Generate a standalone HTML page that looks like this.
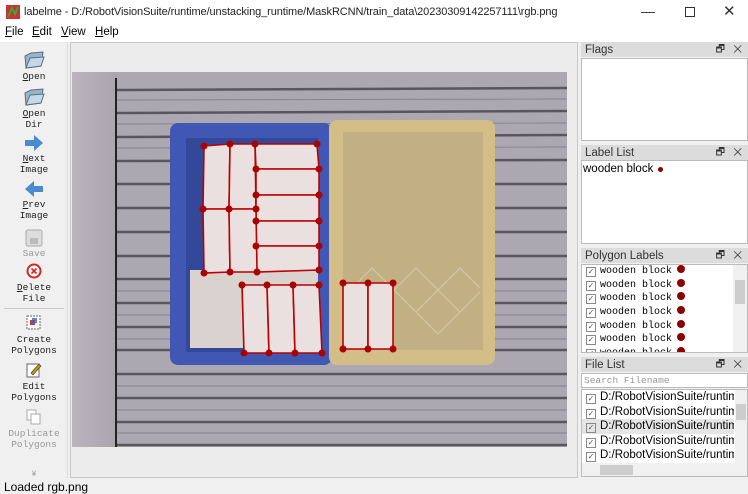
<!DOCTYPE html>
<html><head><meta charset="utf-8"><style>
*{margin:0;padding:0;box-sizing:border-box}
body{width:748px;height:494px;overflow:hidden;background:#f0f0f0;font-family:"Liberation Sans",sans-serif;font-size:12px;color:#000;position:relative}
.abs{position:absolute}
.title{left:0;top:0;width:748px;height:24px;background:#fff}
.menu{left:0;top:24px;width:748px;height:18px;background:#fff}
.menu span{position:absolute;top:2px;font-size:11.5px}
.tb{left:0;top:42px;width:68px;height:436px;background:#f0f0f0;border-right:1px solid #ddd}
.tbl{position:absolute;width:68px;text-align:center;font-family:"Liberation Mono",monospace;font-size:9.5px;line-height:10.5px;color:#222}
.dis{color:#999}
.hdr{position:absolute;left:581px;width:167px;height:15px;background:#dcdcdc;font-size:11.5px;color:#333;padding-left:4px;line-height:16px}
.hdr i{position:absolute;right:6px;font-style:normal;font-size:10px;color:#333}
.box{position:absolute;left:581px;width:167px;background:#fff;border:1px solid #bbb}
.pl{font-family:"Liberation Mono",monospace;font-size:10px;height:13.7px;line-height:13.7px;padding-left:4px;white-space:nowrap}
.cb{display:inline-block;width:10px;height:10px;border:1px solid #888;vertical-align:-1px;margin-right:4px;font-size:8px;line-height:8px;color:#555;text-align:center;font-family:"Liberation Sans",sans-serif}
.dot{display:inline-block;width:8px;height:8px;border-radius:50%;background:#8b0000;margin-left:5px;vertical-align:0}
.fl{font-size:11.5px;height:14.6px;line-height:14.6px;padding-left:4px;white-space:nowrap;overflow:hidden;width:152px}
</style></head><body>
<div class="abs title"></div>
<svg class="abs" style="left:6px;top:5px" width="14" height="14"><rect width="14" height="14" fill="#c33"/><path d="M2 12 L6 3 L9 9 L12 2" stroke="#3a3" stroke-width="2" fill="none"/></svg>
<div class="abs" style="left:24px;top:6px;font-size:11px;color:#222;letter-spacing:-0.1px">labelme - D:/RobotVisionSuite/runtime/unstacking_runtime/MaskRCNN/train_data\20230309142257111\rgb.png</div>
<div class="abs" style="left:641px;top:3px;font-size:14px;color:#333">—</div>
<div class="abs" style="left:685px;top:7px;width:10px;height:10px;border:1px solid #333"></div>
<div class="abs" style="left:723px;top:2px;font-size:15px;color:#333">✕</div>
<div class="abs menu"><span style="left:5px"><u>F</u>ile</span><span style="left:32px"><u>E</u>dit</span><span style="left:61px"><u>V</u>iew</span><span style="left:95px"><u>H</u>elp</span></div>

<div class="abs tb">
<svg class="abs" style="left:23px;top:8px" width="22" height="20"><path d="M2 6 L8 3 L20 2 L18 16 L3 18Z" fill="#9bb4c8" stroke="#56708a"/><path d="M3 18 L7 8 L21 7 L18 16Z" fill="#c6d8e6" stroke="#56708a"/></svg>
<div class="tbl" style="top:30px"><u>O</u>pen</div>
<svg class="abs" style="left:23px;top:45px" width="22" height="20"><path d="M2 6 L8 3 L20 2 L18 16 L3 18Z" fill="#9bb4c8" stroke="#56708a"/><path d="M3 18 L7 8 L21 7 L18 16Z" fill="#c6d8e6" stroke="#56708a"/></svg>
<div class="tbl" style="top:67px"><u>O</u>pen<br>Dir</div>
<svg class="abs" style="left:24px;top:92px" width="20" height="18"><path d="M1 6 H10 V1 L19 9 L10 17 V12 H1Z" fill="#4a8ad0"/></svg>
<div class="tbl" style="top:112px"><u>N</u>ext<br>Image</div>
<svg class="abs" style="left:24px;top:138px" width="20" height="18"><path d="M19 6 H10 V1 L1 9 L10 17 V12 H19Z" fill="#4a8ad0"/></svg>
<div class="tbl" style="top:158px"><u>P</u>rev<br>Image</div>
<svg class="abs" style="left:25px;top:187px" width="18" height="18"><rect x="1" y="1" width="16" height="16" rx="2" fill="#ddd" stroke="#aaa"/><rect x="5" y="9" width="8" height="6" fill="#bbb"/></svg>
<div class="tbl dis" style="top:207px">Save</div>
<svg class="abs" style="left:26px;top:221px" width="16" height="16"><circle cx="8" cy="8" r="6.5" fill="#fff" stroke="#d22" stroke-width="2"/><path d="M5.5 5.5 L10.5 10.5 M10.5 5.5 L5.5 10.5" stroke="#d22" stroke-width="1.6"/></svg>
<div class="tbl" style="top:241px"><u>D</u>elete<br>File</div>
<div class="abs" style="left:4px;top:266px;width:60px;border-top:1px solid #ccc"></div>
<svg class="abs" style="left:26px;top:273px" width="16" height="16"><rect x="1" y="1" width="13" height="13" fill="#fff" stroke="#666" stroke-dasharray="2 1"/><rect x="4" y="5" width="5" height="5" fill="#d33"/><rect x="6" y="3" width="5" height="5" fill="#36c" opacity=".8"/></svg>
<div class="tbl" style="top:293px">Create<br>Polygons</div>
<svg class="abs" style="left:26px;top:320px" width="16" height="16"><rect x="1" y="2" width="12" height="13" fill="#fff" stroke="#666"/><path d="M5 11 L13 2 L15 4 L7 13Z" fill="#c90" stroke="#333" stroke-width=".6"/></svg>
<div class="tbl" style="top:340px">Edit<br>Polygons</div>
<svg class="abs" style="left:26px;top:367px" width="16" height="16"><rect x="1" y="1" width="9" height="10" fill="#fff" stroke="#aaa"/><rect x="5" y="5" width="9" height="10" fill="#fff" stroke="#aaa"/></svg>
<div class="tbl dis" style="top:387px">Duplicate<br>Polygons</div>
<div class="tbl dis" style="top:428px;font-size:8px">¥</div>
</div>

<div class="abs" style="left:70px;top:42px;width:508px;height:436px;background:#ececec;border:1px solid #c8c8c8"></div>
<svg class="abs" style="left:72px;top:72px" width="495" height="375" viewBox="72 72 495 375">
<defs><linearGradient id="wall" x1="0" x2="1"><stop offset="0" stop-color="#bab5bd"/><stop offset="1" stop-color="#aaa5ae"/></linearGradient></defs>
<rect x="72" y="72" width="495" height="375" fill="#aca8b2"/>
<rect x="72" y="72" width="44" height="375" fill="url(#wall)"/>
<g stroke="#5a5660" stroke-width="2.5">
<line x1="116" y1="90" x2="567" y2="88"/><line x1="116" y1="113" x2="567" y2="111"/><line x1="116" y1="137" x2="567" y2="135"/><line x1="116" y1="161" x2="567" y2="160"/><line x1="116" y1="184" x2="567" y2="184"/><line x1="116" y1="208" x2="567" y2="208"/><line x1="116" y1="232" x2="567" y2="232"/><line x1="116" y1="256" x2="567" y2="256"/><line x1="116" y1="279" x2="567" y2="279"/><line x1="116" y1="303" x2="567" y2="303"/><line x1="116" y1="327" x2="567" y2="327"/><line x1="116" y1="350" x2="567" y2="350"/><line x1="116" y1="374" x2="567" y2="374"/><line x1="116" y1="398" x2="567" y2="398"/><line x1="116" y1="422" x2="567" y2="422"/><line x1="116" y1="445" x2="567" y2="445"/>
</g>
<g stroke="#858190" stroke-width="1">
<line x1="116" y1="100" x2="567" y2="99"/><line x1="116" y1="124" x2="567" y2="123"/><line x1="116" y1="148" x2="567" y2="147"/><line x1="116" y1="291" x2="567" y2="291"/><line x1="116" y1="315" x2="567" y2="315"/><line x1="116" y1="339" x2="567" y2="339"/><line x1="116" y1="386" x2="567" y2="386"/><line x1="116" y1="410" x2="567" y2="410"/><line x1="116" y1="433" x2="567" y2="433"/>
</g>
<line x1="116" y1="78" x2="116" y2="447" stroke="#222" stroke-width="2"/>
<rect x="170" y="123" width="162" height="242" rx="8" fill="#4058b4"/>
<rect x="186" y="138" width="132" height="214" fill="#34489a"/>
<rect x="190" y="270" width="128" height="78" fill="#d9d2cf"/>
<rect x="329" y="120" width="166" height="245" rx="8" fill="#d2be86"/>
<rect x="343" y="132" width="140" height="218" fill="#c2b084"/>
<g fill="none" stroke="#d8ccb0" stroke-width="1.5" opacity=".7">
<path d="M350 290 L372 268 L394 290 L416 268 L438 290 L460 268 L480 288 M394 290 L416 312 L438 290 L460 312 L480 292 M416 312 L438 334 L460 312"/>
</g>
<g fill="#e9e0df" stroke="#b00" stroke-width="1.6">
<polygon points="204,146 230,144 229,209 203,209"/>
<polygon points="230,144 255,144 256,209 229,209"/>
<polygon points="255,144 317,144 319,169 256,169"/>
<polygon points="256,169 319,169 319,195 256,195"/>
<polygon points="256,195 319,195 319,221 256,221"/>
<polygon points="256,221 319,221 319,246 256,246"/>
<polygon points="256,246 319,246 319,270 257,272"/>
<polygon points="203,209 229,209 230,272 204,273"/>
<polygon points="229,209 256,209 257,272 230,272"/>
<polygon points="242,285 267,285 269,353 244,353"/>
<polygon points="267,285 293,285 295,353 269,353"/>
<polygon points="293,285 319,285 322,353 295,353"/>
<polygon points="343,283 368,283 368,349 343,349"/>
<polygon points="368,283 393,283 393,349 368,349"/>
</g>
<g fill="#a00">
<circle cx="204" cy="146" r="3.5"/><circle cx="230" cy="144" r="3.5"/><circle cx="255" cy="144" r="3.5"/><circle cx="317" cy="144" r="3.5"/>
<circle cx="256" cy="169" r="3.5"/><circle cx="319" cy="169" r="3.5"/><circle cx="256" cy="195" r="3.5"/><circle cx="319" cy="195" r="3.5"/>
<circle cx="203" cy="209" r="3.5"/><circle cx="229" cy="209" r="3.5"/><circle cx="256" cy="209" r="3.5"/>
<circle cx="256" cy="221" r="3.5"/><circle cx="319" cy="221" r="3.5"/><circle cx="256" cy="246" r="3.5"/><circle cx="319" cy="246" r="3.5"/>
<circle cx="204" cy="273" r="3.5"/><circle cx="230" cy="272" r="3.5"/><circle cx="257" cy="272" r="3.5"/><circle cx="319" cy="270" r="3.5"/>
<circle cx="242" cy="285" r="3.5"/><circle cx="267" cy="285" r="3.5"/><circle cx="293" cy="285" r="3.5"/><circle cx="319" cy="285" r="3.5"/>
<circle cx="244" cy="353" r="3.5"/><circle cx="269" cy="353" r="3.5"/><circle cx="295" cy="353" r="3.5"/><circle cx="322" cy="353" r="3.5"/>
<circle cx="343" cy="283" r="3.5"/><circle cx="368" cy="283" r="3.5"/><circle cx="393" cy="283" r="3.5"/>
<circle cx="343" cy="349" r="3.5"/><circle cx="368" cy="349" r="3.5"/><circle cx="393" cy="349" r="3.5"/>
</g>
</svg>

<div class="hdr" style="top:42px">Flags<i>🗗&nbsp;&nbsp; ✕</i></div>
<div class="box" style="top:58px;height:83px"></div>
<div class="hdr" style="top:145px">Label List<i>🗗&nbsp;&nbsp; ✕</i></div>
<div class="box" style="top:160px;height:84px"><div style="font-size:11.5px;padding-left:1px;margin-top:2px">wooden block <span class="dot" style="width:5px;height:5px;margin-left:1px"></span></div></div>
<div class="hdr" style="top:248px">Polygon Labels<i>🗗&nbsp;&nbsp; ✕</i></div>
<div class="box" style="top:264px;height:89px;overflow:hidden">
<div class="pl"><span class="cb">✓</span>wooden block<span class="dot"></span></div>
<div class="pl"><span class="cb">✓</span>wooden block<span class="dot"></span></div>
<div class="pl"><span class="cb">✓</span>wooden block<span class="dot"></span></div>
<div class="pl"><span class="cb">✓</span>wooden block<span class="dot"></span></div>
<div class="pl"><span class="cb">✓</span>wooden block<span class="dot"></span></div>
<div class="pl"><span class="cb">✓</span>wooden block<span class="dot"></span></div>
<div class="pl"><span class="cb">✓</span>wooden block<span class="dot"></span></div>
<div class="abs" style="right:0;top:0;width:14px;height:88px;background:#f0f0f0"><div style="position:absolute;top:15px;left:2px;width:10px;height:24px;background:#cdcdcd"></div></div>
</div>
<div class="hdr" style="top:357px">File List<i>🗗&nbsp;&nbsp; ✕</i></div>
<div class="box" style="top:373px;height:15px;font-family:'Liberation Mono',monospace;font-size:9.5px;color:#999;padding-left:2px;line-height:13px">Search Filename</div>
<div class="box" style="top:389px;height:88px;overflow:hidden">
<div class="fl"><span class="cb">✓</span>D:/RobotVisionSuite/runtime</div>
<div class="fl"><span class="cb">✓</span>D:/RobotVisionSuite/runtime</div>
<div class="fl" style="background:#e5e5e5"><span class="cb">✓</span>D:/RobotVisionSuite/runtime</div>
<div class="fl"><span class="cb">✓</span>D:/RobotVisionSuite/runtime</div>
<div class="fl"><span class="cb">✓</span>D:/RobotVisionSuite/runtime</div>
<div class="abs" style="right:0;top:0;width:12px;height:73px;background:#f0f0f0"><div style="position:absolute;top:14px;left:1px;width:10px;height:16px;background:#cdcdcd"></div></div>
<div class="abs" style="left:0;top:73px;width:166px;height:14px;background:#f0f0f0"><div style="position:absolute;top:2px;left:18px;width:33px;height:10px;background:#cdcdcd"></div></div>
</div>
<div class="abs" style="left:4px;top:480px;font-size:12px">Loaded rgb.png</div>
</body></html>
